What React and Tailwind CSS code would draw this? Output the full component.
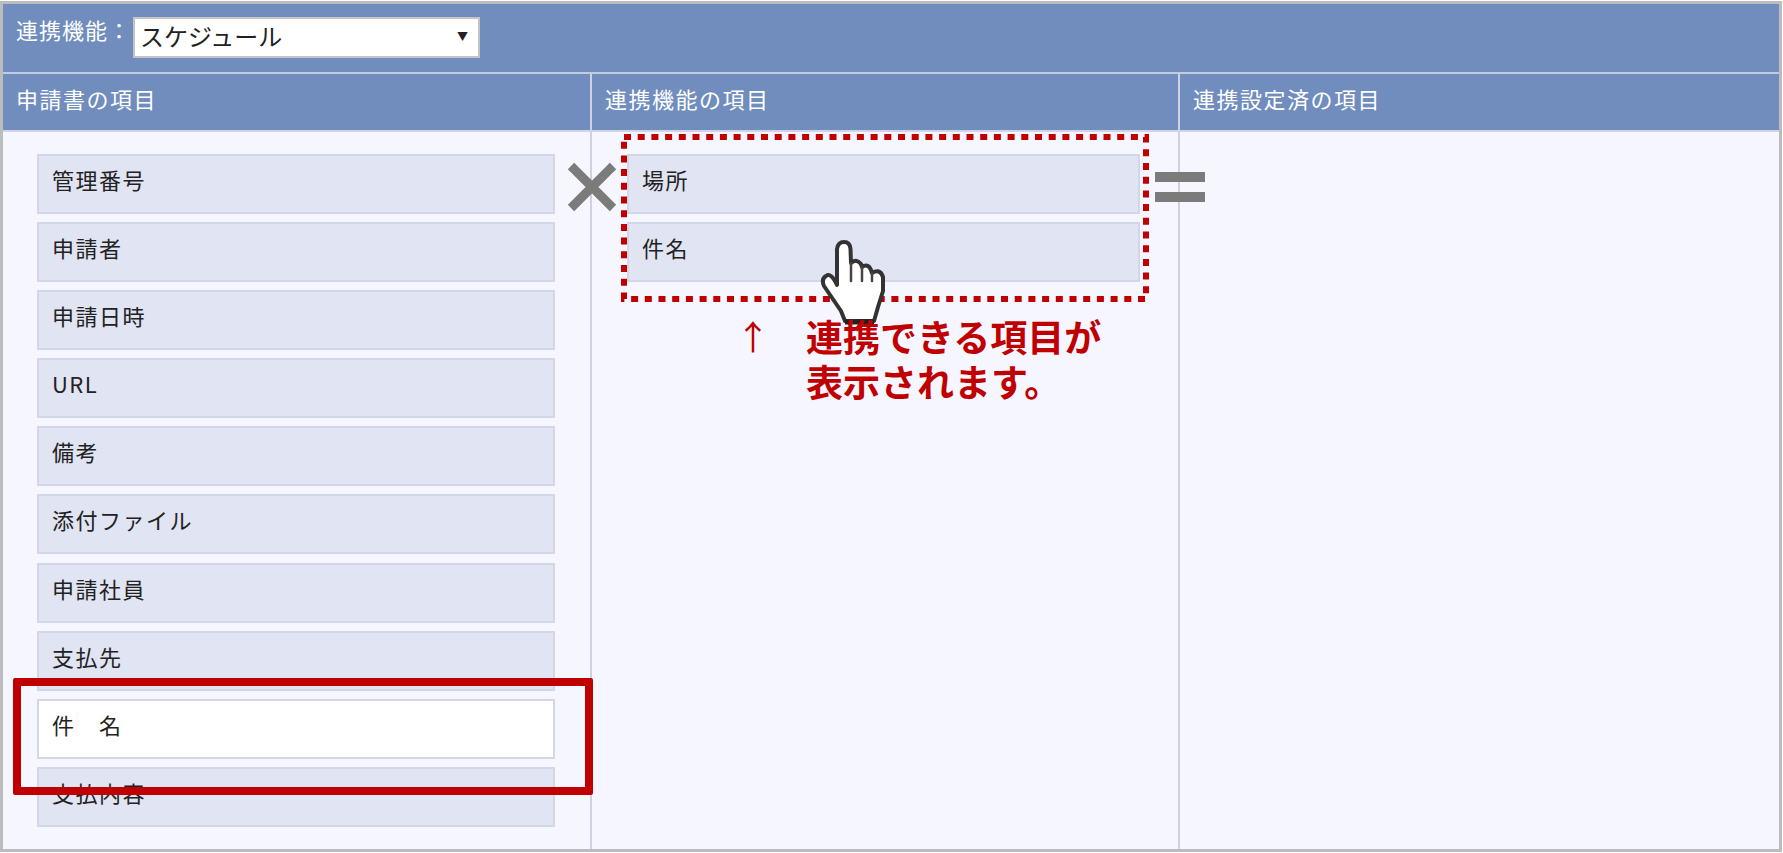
import React from "react";

const leftItems = ["管理番号", "申請者", "申請日時", "URL", "備考", "添付ファイル", "申請社員", "支払先", "件　名", "支払内容"];
const midItems = ["場所", "件名"];

function Item({ label, active }) {
  return (
    <div
      className={`flex h-[60px] items-center border-2 border-[#d3d6e6] pb-[9px] pl-[13px] text-[22px] tracking-[1.5px] text-[#222] ${
        active ? "bg-white" : "bg-[#e0e4f3]"
      }`}
    >
      {label}
    </div>
  );
}

function Hand() {
  return (
    <svg viewBox="0 0 110 110" className="absolute left-[800px] top-[225px] h-[110px] w-[110px] blur-[0.5px]">
      <path
        d="M37 60 L37 24 Q38 17 44 17 Q50 17 50.500 24 L51 38 Q56 33 61 39 L62 42 Q68 38 71 45 L72 48 Q80 43 83 52 L83 66 L78 82 L74 96 L45 96 L41 86 L24 61 Q21 54 26 51 Q31 47 37 60 Z"
        fill="#fff"
        stroke="#333"
        strokeWidth="4"
        strokeLinejoin="round"
      />
      <path d="M51 38 L51 56 M62 42 L62 56 M72 48 L72 56" fill="none" stroke="#444" strokeWidth="2.500" strokeLinecap="round" />
      <path d="M45 97 L74 97" stroke="#222" strokeWidth="5" />
    </svg>
  );
}

export default function App() {
  return (
    <div className="relative h-[853px] w-[1783px] overflow-hidden bg-white pr-px pt-px font-['Noto_Sans_CJK_JP','Noto_Sans',sans-serif]">
      <div className="flex h-[851px] flex-col border-[3px] border-[#bcbcbc] bg-[#f5f6ff]">
        {/* 連携機能 */}
        <div className="flex h-[70px] items-start gap-[2px] border-b-2 border-[#c3cbe0] bg-[#708dbd] pl-[13px] pt-[13px]">
          <span className="-mt-[2px] text-[22px] leading-[28px] tracking-[1px] text-white">連携機能：</span>
          <div className="flex h-[41px] w-[347px] items-center justify-between border-2 border-[#c4c4c4] bg-white pb-[3px] pl-[5px] pr-[10px] text-[24px] tracking-[0px] text-[#222]">
            <span>スケジュール</span>
            <span className="text-[11px]">▼</span>
          </div>
        </div>

        {/* 3 columns */}
        <div className="grid min-h-0 flex-1 grid-cols-[589px_588px_1fr]">
          <div className="flex flex-col border-r-2 border-[#cdd1e2]">
            <div className="flex h-[58px] items-center border-b-2 border-[#d0d5e6] bg-[#708dbd] pb-2 pl-[13px] text-[22px] tracking-[1.5px] text-white">
              申請書の項目
            </div>
            <div className="flex flex-col gap-[8.1px] pl-[34px] pr-[35px] pt-[22px]">
              {leftItems.map((t, i) => (
                <Item key={i} label={t} active={i === 8} />
              ))}
            </div>
          </div>
          <div className="flex flex-col border-r-2 border-[#cdd1e2]">
            <div className="flex h-[58px] items-center border-b-2 border-[#d0d5e6] bg-[#708dbd] pb-2 pl-[13px] text-[22px] tracking-[1.5px] text-white">
              連携機能の項目
            </div>
            <div className="flex flex-col gap-[8.1px] pl-[35px] pr-[38px] pt-[22px]">
              {midItems.map((t) => (
                <Item key={t} label={t} />
              ))}
            </div>
          </div>
          <div className="flex flex-col">
            <div className="flex h-[58px] items-center border-b-2 border-[#d0d5e6] bg-[#708dbd] pb-2 pl-[13px] text-[22px] tracking-[1.5px] text-white">
              連携設定済の項目
            </div>
          </div>
        </div>
      </div>

      {/* annotations on top */}
      <div className="absolute left-[13px] top-[678px] h-[117px] w-[580px] rounded-[2px] border-[8px] border-[#c00000]" />

      <svg className="absolute left-[621px] top-[134px] h-[168px] w-[528px]" viewBox="0 0 528 168">
        <rect x="3" y="3" width="522" height="162" fill="none" stroke="#c00000" strokeWidth="6" strokeDasharray="7 6.700" />
      </svg>

      <svg className="absolute left-[567px] top-[162px] h-[50px] w-[50px]" viewBox="0 0 50 50">
        <path d="M4 4 L46 46 M46 4 L4 46" stroke="#7b7b7b" strokeWidth="9" />
      </svg>

      <div className="absolute left-[1155px] top-[172px] flex h-[30px] w-[50px] flex-col justify-between">
        <div className="h-[10px] bg-[#7b7b7b]" />
        <div className="h-[10px] bg-[#7b7b7b]" />
      </div>

      <Hand />

      <div className="absolute left-[736px] top-[313px] text-[34px] leading-[45px] text-[#c00000]">↑</div>
      <div className="absolute left-[806px] top-[314px] text-[37px] font-bold leading-[45px] text-[#c00000]">
        連携できる項目が
        <br />
        表示されます。
      </div>
    </div>
  );
}
